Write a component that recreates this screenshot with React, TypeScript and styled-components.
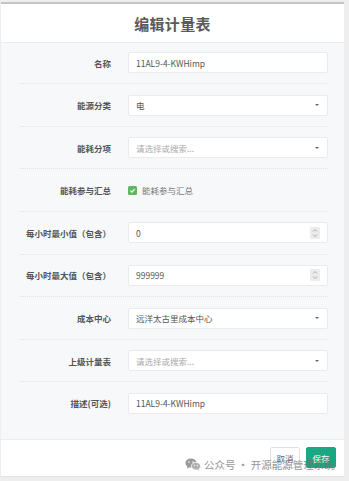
import React from 'react';
import styled, { createGlobalStyle } from 'styled-components';

const GlobalStyle = createGlobalStyle`
  html, body {
    margin: 0;
    padding: 0;
    background: #eeeeee;
    font-family: "Noto Sans CJK SC", "Liberation Sans", sans-serif;
    color: #555;
  }
`;

type Field =
  | { kind: 'text'; label: string; value: string }
  | { kind: 'select'; label: string; value?: string; placeholder?: string }
  | { kind: 'number'; label: string; value: string }
  | { kind: 'check'; label: string; text: string };

const fields: Field[] = [
  { kind: 'text', label: '名称', value: '11AL9-4-KWHimp' },
  { kind: 'select', label: '能源分类', value: '电' },
  { kind: 'select', label: '能耗分项', placeholder: '请选择或搜索...' },
  { kind: 'check', label: '能耗参与汇总', text: '能耗参与汇总' },
  { kind: 'number', label: '每小时最小值（包含）', value: '0' },
  { kind: 'number', label: '每小时最大值（包含）', value: '999999' },
  { kind: 'select', label: '成本中心', value: '远洋太古里成本中心' },
  { kind: 'select', label: '上级计量表', placeholder: '请选择或搜索...' },
  { kind: 'text', label: '描述(可选)', value: '11AL9-4-KWHimp' },
];

export default function App() {
  return (
    <>
      <GlobalStyle />
      <Page>
        <Modal>
          <Header>
            <Title>编辑计量表</Title>
          </Header>
          <Body>
            {fields.map((f, i) => (
              <Row key={i} last={i === fields.length - 1}>
                <Label>{f.label}</Label>
                <FieldControl field={f} />
              </Row>
            ))}
          </Body>
          <Footer>
            <Button>取消</Button>
            <Button primary>保存</Button>
            <Watermark>
              <WeChatIcon />
              <span>公众号 · 开源能源管理系统</span>
            </Watermark>
          </Footer>
        </Modal>
      </Page>
    </>
  );
}

function FieldControl({ field }: { field: Field }) {
  if (field.kind === 'check') {
    return (
      <CheckLine>
        <CheckBox>
          <svg width="7" height="7" viewBox="0 0 10 10">
            <path d="M2 5.2 L4.2 7.3 L8 3" stroke="#fff" strokeWidth="1.8" fill="none" />
          </svg>
        </CheckBox>
        <span>{field.text}</span>
      </CheckLine>
    );
  }
  if (field.kind === 'select') {
    return (
      <Input>
        <InputText placeholder={!field.value}>{field.value ?? field.placeholder}</InputText>
        <Caret />
      </Input>
    );
  }
  if (field.kind === 'number') {
    return (
      <Input>
        <InputText>{field.value}</InputText>
        <Spinner>
          <svg width="6" height="10" viewBox="0 0 6 10">
            <path d="M1 3.5 L3 1.5 L5 3.5 M1 6.5 L3 8.5 L5 6.5" stroke="#999" strokeWidth="0.8" fill="none" />
          </svg>
        </Spinner>
      </Input>
    );
  }
  return (
    <Input>
      <InputText>{field.value}</InputText>
    </Input>
  );
}

function WeChatIcon() {
  return (
    <svg width="16" height="13" viewBox="0 0 16 13">
      <ellipse cx="6" cy="5" rx="5.6" ry="4.6" fill="#9a9a9a" />
      <path d="M2.5 8.2 L2 10.5 L4.6 9.2 Z" fill="#9a9a9a" />
      <ellipse cx="11" cy="8.2" rx="4.6" ry="3.8" fill="#b0b0b0" stroke="#fff" strokeWidth="0.8" />
      <path d="M13.4 11 L14.2 12.6 L11.8 11.7 Z" fill="#b0b0b0" />
      <circle cx="4" cy="4" r="0.8" fill="#fff" />
      <circle cx="8" cy="4" r="0.8" fill="#fff" />
      <circle cx="9.6" cy="7.6" r="0.6" fill="#fff" />
      <circle cx="12.4" cy="7.6" r="0.6" fill="#fff" />
    </svg>
  );
}

const Page = styled.div`
  width: 349px;
  height: 481px;
  padding-top: 2px;
  box-sizing: border-box;
  overflow: hidden;
`;

const Modal = styled.div`
  margin-left: 1px;
  width: 343px;
  border-top: 2px solid #c4c4c4;
  background: #fff;
`;

const Header = styled.div`
  height: 38px;
  display: flex;
  align-items: center;
  justify-content: center;
  background: #fff;
  border-bottom: 1px solid #ececec;
`;

const Title = styled.h1`
  margin: 0;
  font-size: 15px;
  font-weight: 700;
  color: #5a5a5a;
  letter-spacing: 0.3px;
`;

const Body = styled.div`
  background: #f7f8fa;
  padding: 9px 0 25px;
  border-bottom: 1px solid #ececec;
`;

const Row = styled.div<{ last?: boolean }>`
  display: grid;
  grid-template-columns: 91px 200px;
  column-gap: 17px;
  align-items: center;
  margin: 0 16px 0 19px;
  padding: 10.3px 0;
  border-bottom: ${({ last }) => (last ? 'none' : '1px dotted #e2e2e2')};
  &:first-child {
    padding-top: 0;
  }
  &:last-child {
    padding-bottom: 0;
  }
`;

const Label = styled.div`
  text-align: right;
  font-size: 8.5px;
  font-weight: 700;
  color: #555;
  white-space: nowrap;
`;

const Input = styled.div`
  height: 21px;
  box-sizing: border-box;
  background: #fff;
  border: 1px solid #ebebeb;
  border-radius: 2px;
  display: flex;
  align-items: center;
  justify-content: space-between;
  padding: 0 6px 0 7px;
`;

const InputText = styled.span<{ placeholder?: boolean }>`
  font-size: 8.5px;
  color: ${({ placeholder }) => (placeholder ? '#aaa' : '#555')};
`;

const Caret = styled.span`
  width: 0;
  height: 0;
  margin-right: 2px;
  border-left: 2px solid transparent;
  border-right: 2px solid transparent;
  border-top: 2.5px solid #666;
`;

const Spinner = styled.span`
  width: 10px;
  height: 12px;
  background: #ececec;
  border-radius: 1px;
  display: flex;
  align-items: center;
  justify-content: center;
  margin-right: 1px;
`;

const CheckLine = styled.div`
  height: 21px;
  display: flex;
  align-items: center;
  gap: 5px;
  font-size: 8.5px;
  color: #777;
`;

const CheckBox = styled.span`
  width: 9px;
  height: 9px;
  border-radius: 1.5px;
  background: #5cb85c;
  display: flex;
  align-items: center;
  justify-content: center;
`;

const Footer = styled.div`
  position: relative;
  height: 36px;
  background: #fff;
  display: flex;
  align-items: center;
  justify-content: flex-end;
  gap: 6px;
  padding: 0 8px;
  border-bottom: 1px solid #e4e4e4;
`;

const Button = styled.button<{ primary?: boolean }>`
  width: 30px;
  height: 21px;
  padding: 0;
  font-family: inherit;
  font-size: 8.5px;
  border-radius: 2px;
  border: 1px solid ${({ primary }) => (primary ? '#1aa883' : '#e0e0e0')};
  background: ${({ primary }) => (primary ? '#1aa883' : '#fff')};
  color: ${({ primary }) => (primary ? '#fff' : '#666')};
`;

const Watermark = styled.div`
  position: absolute;
  left: 184px;
  top: 17px;
  display: flex;
  align-items: center;
  gap: 3px;
  font-size: 10.5px;
  color: rgba(110, 110, 110, 0.75);
  white-space: nowrap;
  pointer-events: none;
`;
